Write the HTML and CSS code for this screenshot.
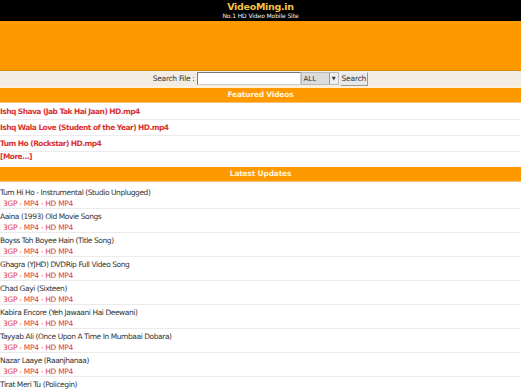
FILE: index.html
```html
<!DOCTYPE html>
<html>
<head>
<meta charset="utf-8">
<title>VideoMing.in</title>
<link rel="stylesheet" href="styles.css">
</head>
<body>
<div class="top">
  <div class="logo">VideoMing.in</div>
  <div class="tag">No.1 HD Video Mobile Site</div>
</div>
<div class="banner"></div>
<form class="search">
  <span class="lbl">Search File :</span>
  <input class="box" type="text">
  <span class="sel"><span class="selv">ALL</span><span class="arr">&#9660;</span></span>
  <button class="btn" type="button">Search</button>
</form>
<div class="hd">Featured Videos</div>
<div class="feat">
  <a class="frow first" href="#">Ishq Shava (Jab Tak Hai Jaan) HD.mp4</a>
  <a class="frow" href="#">Ishq Wala Love (Student of the Year) HD.mp4</a>
  <a class="frow" href="#">Tum Ho (Rockstar) HD.mp4</a>
  <a class="frow more" href="#">[More...]</a>
</div>
<div class="hd latest">Latest Updates</div>
<div class="list">
  <div class="item"><div class="t">Tum Hi Ho - Instrumental (Studio Unplugged)</div><div class="l"><a href="#">3GP</a> - <a href="#">MP4</a> - <a href="#">HD MP4</a></div></div>
  <div class="item"><div class="t">Aaina (1993) Old Movie Songs</div><div class="l"><a href="#">3GP</a> - <a href="#">MP4</a> - <a href="#">HD MP4</a></div></div>
  <div class="item"><div class="t">Boyss Toh Boyee Hain (Title Song)</div><div class="l"><a href="#">3GP</a> - <a href="#">MP4</a> - <a href="#">HD MP4</a></div></div>
  <div class="item"><div class="t">Ghagra (YJHD) DVDRip Full Video Song</div><div class="l"><a href="#">3GP</a> - <a href="#">MP4</a> - <a href="#">HD MP4</a></div></div>
  <div class="item"><div class="t">Chad Gayi (Sixteen)</div><div class="l"><a href="#">3GP</a> - <a href="#">MP4</a> - <a href="#">HD MP4</a></div></div>
  <div class="item"><div class="t">Kabira Encore (Yeh Jawaani Hai Deewani)</div><div class="l"><a href="#">3GP</a> - <a href="#">MP4</a> - <a href="#">HD MP4</a></div></div>
  <div class="item"><div class="t">Tayyab Ali (Once Upon A Time In Mumbaai Dobara)</div><div class="l"><a href="#">3GP</a> - <a href="#">MP4</a> - <a href="#">HD MP4</a></div></div>
  <div class="item"><div class="t">Nazar Laaye (Raanjhanaa)</div><div class="l"><a href="#">3GP</a> - <a href="#">MP4</a> - <a href="#">HD MP4</a></div></div>
  <div class="item"><div class="t">Tirat Meri Tu (Policegin)</div></div>
</div>
</body>
</html>
```

FILE: styles.css
```css
html, body {
  margin: 0;
  padding: 0;
  background: #fff;
}
body {
  font-family: "DejaVu Sans", Verdana, sans-serif;
  font-size: 7.5px;
  color: #333;
  overflow: hidden;
}
.top {
  background: #000;
  height: 21px;
  text-align: center;
  overflow: hidden;
}
.logo {
  color: #f2c246;
  font-weight: bold;
  font-size: 9.5px;
  line-height: 11px;
  padding-top: 1px;
  letter-spacing: -0.3px;
}
.tag {
  color: #f4f4f4;
  font-size: 6px;
  line-height: 8px;
  letter-spacing: -0.1px;
}
.banner {
  background: #ff9900;
  height: 49px;
  border-bottom: 1px solid #d98a10;
}
.search {
  margin: 0;
  background: #f3ece2;
  height: 15px;
  border-bottom: 2px solid #fdf0da;
  display: flex;
  justify-content: center;
  align-items: center;
}
.lbl {
  color: #333;
  margin-right: 2px;
  letter-spacing: -0.3px;
}
.box {
  width: 104px;
  height: 13px;
  box-sizing: border-box;
  margin: 0;
  padding: 0;
  border: 1px solid #777;
  border-right-color: #ccc;
  border-bottom-color: #ccc;
  background: #fff;
}
.sel {
  display: flex;
  align-items: center;
  width: 38px;
  height: 13px;
  box-sizing: border-box;
  background: #dcdcdc;
  border: 1px solid #bbb;
  font-size: 7px;
  color: #333;
}
.selv {
  flex: 1;
  padding-left: 2px;
}
.arr {
  font-size: 5px;
  width: 8px;
  height: 11px;
  line-height: 11px;
  text-align: center;
  background: #eee;
  border-left: 1px solid #999;
}
.btn {
  margin: 0 0 0 1px;
  height: 14px;
  padding: 0 1px;
  font-family: inherit;
  font-size: 7.5px;
  color: #333;
  background: #e8e8e8;
  border: 1px solid #999;
  border-top-color: #eee;
  border-left-color: #eee;
  letter-spacing: -0.2px;
}
.hd {
  background: #ff9900;
  height: 14px;
  line-height: 14px;
  text-align: center;
  color: #fff4de;
  font-weight: bold;
  border-bottom: 1px solid #f5c37a;
  letter-spacing: -0.2px;
}
.feat {
  display: flex;
  flex-direction: column;
}
.frow {
  display: block;
  height: 15px;
  line-height: 15px;
  border-bottom: 1px solid #ebebeb;
  color: #d93434;
  font-weight: bold;
  text-decoration: none;
  letter-spacing: -0.55px;
}
.frow.first {
  height: 16px;
  line-height: 17px;
}
.frow.more {
  border-bottom: none;
  height: 15px;
  line-height: 10px;
}
.latest {
  margin-bottom: 3px;
}
.item {
  height: 21px;
  padding-top: 2px;
  border-bottom: 1px solid #ebebeb;
}
.t {
  line-height: 11px;
  color: #333;
  letter-spacing: -0.43px;
}
.l {
  line-height: 11px;
  color: #e03a3a;
  padding-left: 3px;
  letter-spacing: -0.3px;
}
.l a {
  color: #e03a3a;
  text-decoration: none;
}
```
